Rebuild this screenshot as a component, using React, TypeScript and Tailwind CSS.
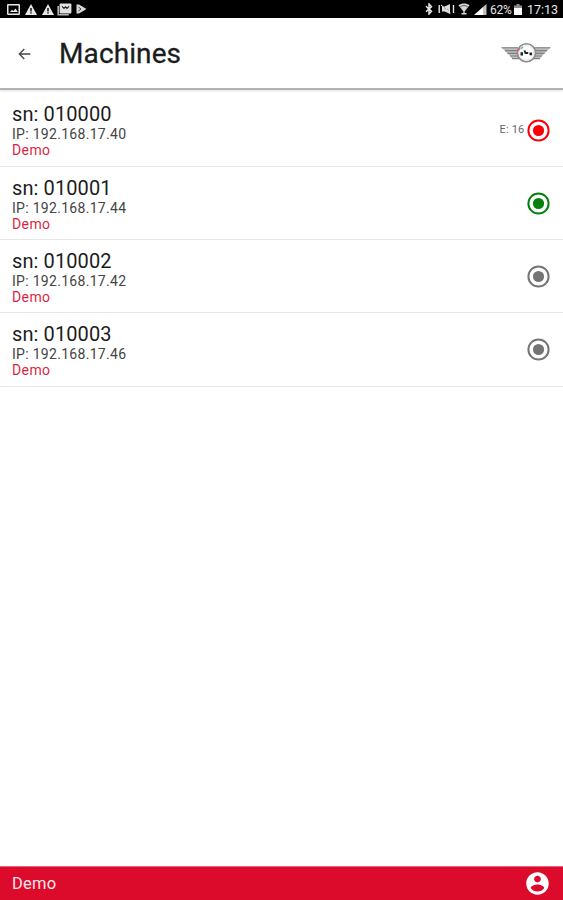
import React from 'react';

interface Machine {
  serial: string;
  ip: string;
  group: string;
  color: string;
  error?: string;
}

const machines: Machine[] = [
  { serial: '010000', ip: '192.168.17.40', group: 'Demo', color: 'text-[#fb0007]', error: 'E: 16' },
  { serial: '010001', ip: '192.168.17.44', group: 'Demo', color: 'text-[#04800c]' },
  { serial: '010002', ip: '192.168.17.42', group: 'Demo', color: 'text-[#757575]' },
  { serial: '010003', ip: '192.168.17.46', group: 'Demo', color: 'text-[#757575]' },
];

const WarningIcon = () => (
  <svg viewBox="0 0 12 11" className="w-3 h-[11px]" fill="#e6e6e6">
    <path fillRule="evenodd" d="M6 0 12 11H0ZM5.3 4v3.4h1.4V4ZM5.3 8.3v1.3h1.4V8.3Z" />
  </svg>
);

const StatusBar = () => (
  <div className="h-[18px] shrink-0 bg-black text-[#e6e6e6] flex items-center justify-between pl-[7px] pr-[5px]">
    <div className="flex items-center gap-[5px]">
      {/* Picture */}
      <svg viewBox="0 0 13 11" className="w-[13px] h-[11px]" fill="none" stroke="#e6e6e6" strokeWidth="1.5">
        <rect x="0.75" y="0.75" width="11.5" height="9.5" rx="0.5" />
        <path d="M3 8 5 5.8 6.5 7.1 8.6 4.6 10.8 8Z" fill="#e6e6e6" stroke="none" />
      </svg>
      <WarningIcon />
      <WarningIcon />
      {/* News */}
      <svg viewBox="0 0 15 13" className="w-[15px] h-[13px] -ml-[2px]" fill="none">
        <path d="M1.2 3v8.8h10.6" stroke="#b5b5b5" strokeWidth="1.6" />
        <rect x="2.6" y="0.5" width="11.8" height="10" rx="1" fill="#e0e0e0" />
        <path d="M5 3.4 7 5.4l1.5-1.6L10 5.4l2-2" stroke="#222" strokeWidth="1.2" />
      </svg>
      {/* Play store */}
      <svg viewBox="0 0 11 10" className="w-[11px] h-[10px] -ml-px">
        <path d="M0.5 0.5 3 0.5 10.5 5 3 9.5H0.5Z" fill="#d8d8d8" />
        <path d="M2.5 3 5 5 2.5 7" stroke="#333" strokeWidth="0.9" fill="none" />
      </svg>
    </div>
    <div className="flex items-center">
      {/* Bluetooth */}
      <svg viewBox="0 0 8 12" className="w-2 h-3 mr-[5px]" fill="none" stroke="#e6e6e6" strokeWidth="1.5">
        <path d="M1 3.2 6.5 8.4 4 11V1L6.5 3.6 1 8.8" />
      </svg>
      {/* Muted */}
      <svg viewBox="0 0 17 12" className="w-[17px] h-3 mr-[3px]" fill="none" stroke="#e6e6e6" strokeWidth="1.4">
        <path d="M1.2 2v8M15.5 2v8" />
        <path d="M4 3.5h2.8L12 1v10L6.8 8.5H4Z" fill="#dcdcdc" stroke="none" />
        <path d="M6 4.5 10.500 8" stroke="#222" strokeWidth="1" />
        <path d="M3 2 12.5 10" strokeWidth="1" />
      </svg>
      {/* Wi-Fi */}
      <svg viewBox="0 0 12 12" className="w-3 h-3 mr-1">
        <path d="M0.5 2.2C3.5-.2 8.5-.2 11.5 2.2L7 8H5Z" fill="#d6d6d6" />
        <path d="M2.3 3.8c2.2-1.7 5.2-1.7 7.4 0" stroke="#444" strokeWidth="0.8" fill="none" />
        <path d="M5.3 8h1.4v2h1.8v1.5h-5V10h1.8Z" fill="#d6d6d6" />
      </svg>
      {/* Signal */}
      <svg viewBox="0 0 13 11" className="w-[13px] h-[11px] mr-[3px]">
        <path d="M0 11 9 3.1V11Z" fill="#fff" />
        <path d="M9 3.1 12.5 0v11H9Z" fill="#c2c2c2" />
      </svg>
      <span className="text-[12px] leading-[18px] w-[22px] tracking-[-0.3px] pt-px">62%</span>
      {/* Battery */}
      <svg viewBox="0 0 8 11" className="w-2 h-[11px] mr-[5px] ml-[2px]">
        <path d="M2.5 0h3v1.5H8V11H0V1.5h2.5Z" fill="#8c8c8c" />
        <path d="M0 4h8v7H0Z" fill="#fff" />
      </svg>
      <span className="text-[12.5px] leading-[18px] w-[31px] whitespace-nowrap pt-px">17:13</span>
    </div>
  </div>
);

const WingsLogo = () => (
  <svg viewBox="0 0 50 22" className="w-[50px] h-[22px]">
    <path d="M0.5 5.5H18V16.5H12Q10 16.5 9 14Z" fill="#bdbdbd" />
    <path d="M49.5 5.5H32V16.5H38Q40 16.5 41 14Z" fill="#bdbdbd" />
    <path
      d="M.5 5.7H17M4 8.6h12M6.5 11.4H16M9 14h8M11 16.6h7M49.5 5.7H33M46 8.6H34M43.5 11.4H34M41 14h-8M39 16.6h-7"
      stroke="#808080"
      strokeWidth="1.1"
    />
    <circle cx="25.5" cy="10.8" r="9" fill="#fff" stroke="#8c8c8c" strokeWidth="1.6" />
    <circle cx="25.5" cy="10.8" r="7.3" fill="none" stroke="#e2e2e2" strokeWidth="0.8" />
    <path d="m16.5 9 2.5-2.5" stroke="#ef5870" strokeWidth="1.4" />
    <path d="m20 6.8 2-1.8" stroke="#47b6a0" strokeWidth="1.3" />
    <path d="M19.5 10.2h2.5v3.2h-2.5ZM22.6 8.6h2.2v1.4h2.4v2h-3.4ZM28.5 10.500h2.600v2.700h-2.600Z" fill="#222" />
  </svg>
);

const StatusIcon = ({ color }: { color: string }) => (
  <svg viewBox="0 0 27 27" className={`w-[27px] h-[27px] ${color}`}>
    <circle cx="13.5" cy="13.5" r="10.1" fill="none" stroke="currentColor" strokeWidth="2" />
    <circle cx="13.5" cy="13.5" r="5.6" fill="currentColor" />
  </svg>
);

const MachineRow = ({ machine }: { machine: Machine }) => (
  <li className="h-[73.3px] border-b border-[#e6e6e6] pl-3 pr-[11.5px] flex items-center justify-between">
    <div className="pt-[1.4px]">
      <div className="text-[20px] leading-6 tracking-[0.1px] text-[#1c1c1c]">sn: {machine.serial}</div>
      <div className="text-[14px] leading-4 tracking-[0.3px] text-[#444]">IP: {machine.ip}</div>
      <div className="text-[14px] leading-4 tracking-[0.4px] text-[#dc1f45]">{machine.group}</div>
    </div>
    <div className="flex items-center pt-px">
      {machine.error && <span className="text-[11px] tracking-[0.2px] text-[#666]">{machine.error}</span>}
      <StatusIcon color={machine.color} />
    </div>
  </li>
);

export default function App() {
  return (
    <div className="w-full h-screen bg-white flex flex-col overflow-hidden font-[Roboto,sans-serif]">
      <StatusBar />
      <header className="h-[72px] shrink-0 border-b-2 border-[#b3b3b3] flex items-center pl-[18px] pr-[12px] shadow-[0_1px_2px_rgba(0,0,0,0.12)]">
        <svg viewBox="0 0 13 12" className="w-[13px] h-3 mt-[2px]" fill="none" stroke="#444" strokeWidth="1.3">
          <path d="M12.3 6H1.3M6.3 1 1.3 6l5 5" />
        </svg>
        <h1 className="ml-7 pt-[2px] text-[28px] leading-9 tracking-[0.1px] text-[#1c1c1c] [-webkit-text-stroke:0.3px_#1c1c1c]">
          Machines
        </h1>
        <div className="ml-auto">
          <WingsLogo />
        </div>
      </header>
      <ul className="flex-1 pt-[3.4px]">
        {machines.map((machine) => (
          <MachineRow key={machine.serial} machine={machine} />
        ))}
      </ul>
      <footer className="h-[34px] shrink-0 bg-[#dc0a2b] border-t border-[#e8607a] flex items-center justify-between pl-3 pr-3 text-white">
        <span className="text-[16.5px] tracking-[0.2px] pt-px text-[#fde8ec]">Demo</span>
        <svg viewBox="0 0 24 24" className="w-[27px] h-[27px]" fill="#fff">
          <path d="M12 2C6.48 2 2 6.48 2 12s4.48 10 10 10 10-4.48 10-10S17.52 2 12 2zm0 3c1.66 0 3 1.34 3 3s-1.34 3-3 3-3-1.34-3-3 1.34-3 3-3zm0 14.2c-2.5 0-4.71-1.28-6-3.22.03-1.99 4-3.08 6-3.08 1.99 0 5.97 1.09 6 3.08-1.29 1.94-3.5 3.22-6 3.22z" />
        </svg>
      </footer>
    </div>
  );
}
